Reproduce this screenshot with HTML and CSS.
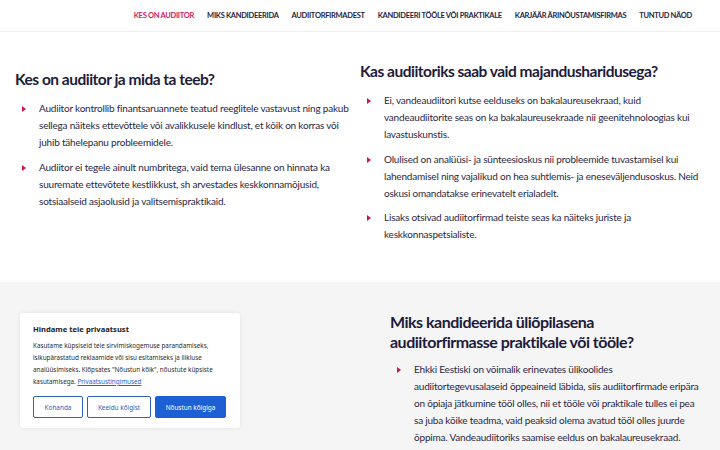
FILE: index.html
```html
<!DOCTYPE html>
<html lang="et">
<head>
<meta charset="utf-8">
<title>Kes on audiitor</title>
<link rel="stylesheet" href="styles.css">
</head>
<body>
<header class="nav">
  <a class="nav-link active">KES ON AUDIITOR</a>
  <a class="nav-link">MIKS KANDIDEERIDA</a>
  <a class="nav-link">AUDIITORFIRMADEST</a>
  <a class="nav-link">KANDIDEERI TÖÖLE VÕI PRAKTIKALE</a>
  <a class="nav-link">KARJÄÄR ÄRINÕUSTAMISFIRMAS</a>
  <a class="nav-link">TUNTUD NÄOD</a>
</header>

<section class="intro">
  <div class="col col-left">
    <h2 class="heading">Kes on audiitor ja mida ta teeb?</h2>
    <ul class="list">
      <li>Audiitor kontrollib finantsaruannete teatud reeglitele vastavust ning pakub sellega näiteks ettevõttele või avalikkusele kindlust, et kõik on korras või juhib tähelepanu probleemidele.</li>
      <li>Audiitor ei tegele ainult numbritega, vaid tema ülesanne on hinnata ka suuremate ettevõtete kestlikkust, sh arvestades keskkonnamõjusid, sotsiaalseid asjaolusid ja valitsemispraktikaid.</li>
    </ul>
  </div>
  <div class="col col-right">
    <h2 class="heading">Kas audiitoriks saab vaid majandusharidusega?</h2>
    <ul class="list">
      <li>Ei, vandeaudiitori kutse eelduseks on bakalaureusekraad, kuid vandeaudiitorite seas on ka bakalaureusekraade nii geenitehnoloogias kui lavastuskunstis.</li>
      <li>Olulised on analüüsi- ja sünteesioskus nii probleemide tuvastamisel kui lahendamisel ning vajalikud on hea suhtlemis- ja eneseväljendusoskus. Neid oskusi omandatakse erinevatelt erialadelt.</li>
      <li>Lisaks otsivad audiitorfirmad teiste seas ka näiteks juriste ja keskkonnaspetsialiste.</li>
    </ul>
  </div>
</section>

<section class="why">
  <div class="why-left">
    <div class="cookie">
      <h3 class="cookie-title">Hindame teie privaatsust</h3>
      <p class="cookie-text">Kasutame küpsiseid teie sirvimiskogemuse parandamiseks, isikupärastatud reklaamide või sisu esitamiseks ja liikluse analüüsimiseks. Klõpsates "Nõustun kõik", nõustute küpsiste kasutamisega. <a class="cookie-link">Privaatsustingimused</a></p>
      <div class="cookie-buttons">
        <button class="btn btn-outline btn-small">Kohanda</button>
        <button class="btn btn-outline">Keeldu kõigist</button>
        <button class="btn btn-primary">Nõustun kõigiga</button>
      </div>
    </div>
  </div>
  <div class="why-right">
    <h2 class="heading heading-why">Miks kandideerida üliõpilasena audiitorfirmasse praktikale või tööle?</h2>
    <ul class="list">
      <li>Ehkki Eestiski on võimalik erinevates ülikoolides audiitortegevusalaseid õppeaineid läbida, siis audiitorfirmade eripära on õpiaja jätkumine tööl olles, nii et tööle või praktikale tulles ei pea sa juba kõike teadma, vaid peaksid olema avatud tööl olles juurde õppima. Vandeaudiitoriks saamise eeldus on bakalaureusekraad.</li>
    </ul>
  </div>
</section>
</body>
</html>
```

FILE: styles.css
```css
* { box-sizing: border-box; }

html, body {
  margin: 0;
  padding: 0;
  background: #ffffff;
  font-family: Lato, "Noto Sans", sans-serif;
  color: #27243f;
  overflow: hidden;
}

.nav {
  height: 32px;
  display: flex;
  align-items: center;
  justify-content: flex-end;
  gap: 13px;
  padding-right: 28px;
  padding-bottom: 1px;
  border-bottom: 1px solid #efeff1;
}

.nav-link {
  font-size: 7.5px;
  font-weight: 700;
  letter-spacing: -0.3px;
  color: #262340;
  white-space: nowrap;
}

.nav-link.active { color: #d6195b; }

.intro {
  display: grid;
  grid-template-columns: 345px 1fr;
  padding: 29px 15px 0 15px;
  height: 250px;
}

.col-left { padding-top: 8px; }

.heading {
  margin: 0 0 11px 0;
  font-size: 15.5px;
  line-height: 20px;
  font-weight: 700;
  letter-spacing: -0.5px;
  color: #1e1b3b;
}

.list {
  list-style: none;
  margin: 0;
  padding: 0;
}

.list li {
  position: relative;
  padding-left: 24px;
  font-size: 10px;
  line-height: 17px;
  letter-spacing: -0.2px;
  margin-bottom: 7.5px;
  color: #2a2742;
}

.list li::before {
  content: "";
  position: absolute;
  left: 7px;
  top: 6px;
  border-left: 4px solid #c9174f;
  border-top: 3px solid transparent;
  border-bottom: 3px solid transparent;
}

.why {
  background: #f5f5f6;
  display: grid;
  grid-template-columns: 375px 1fr;
  height: 170px;
}

.why-left { padding: 31px 0 0 20px; }

.cookie {
  width: 220px;
  background: #ffffff;
  border-radius: 3px;
  box-shadow: 0 0 4px rgba(0, 0, 0, 0.08);
  padding: 10px 13px 10px 13px;
  font-family: "Noto Sans", sans-serif;
}

.cookie-title {
  margin: 0 0 5px 0;
  font-size: 7.6px;
  line-height: 12px;
  font-weight: 700;
  color: #1b1b1b;
}

.cookie-text {
  margin: 0 0 8px 0;
  font-size: 6.3px;
  line-height: 12px;
  color: #2b2b2b;
}

.cookie-link {
  color: #1f5fd6;
  text-decoration: underline;
}

.cookie-buttons {
  display: flex;
  gap: 4px;
}

.btn {
  height: 22px;
  font-family: "Noto Sans", sans-serif;
  font-size: 6.4px;
  border-radius: 2px;
  padding: 0;
  flex: 0 0 auto;
}

.btn-outline {
  width: 64px;
  background: #ffffff;
  border: 1.5px solid #2e62b8;
  color: #2e62b8;
}

.btn-small { width: 50px; }

.btn-primary {
  width: 71px;
  background: #1d60d3;
  border: 1.5px solid #1d60d3;
  color: #ffffff;
}

.why-right { padding: 30px 15px 0 15px; }

.heading-why {
  max-width: 250px;
  font-size: 16px;
  line-height: 20px;
  margin-bottom: 9px;
}
```
